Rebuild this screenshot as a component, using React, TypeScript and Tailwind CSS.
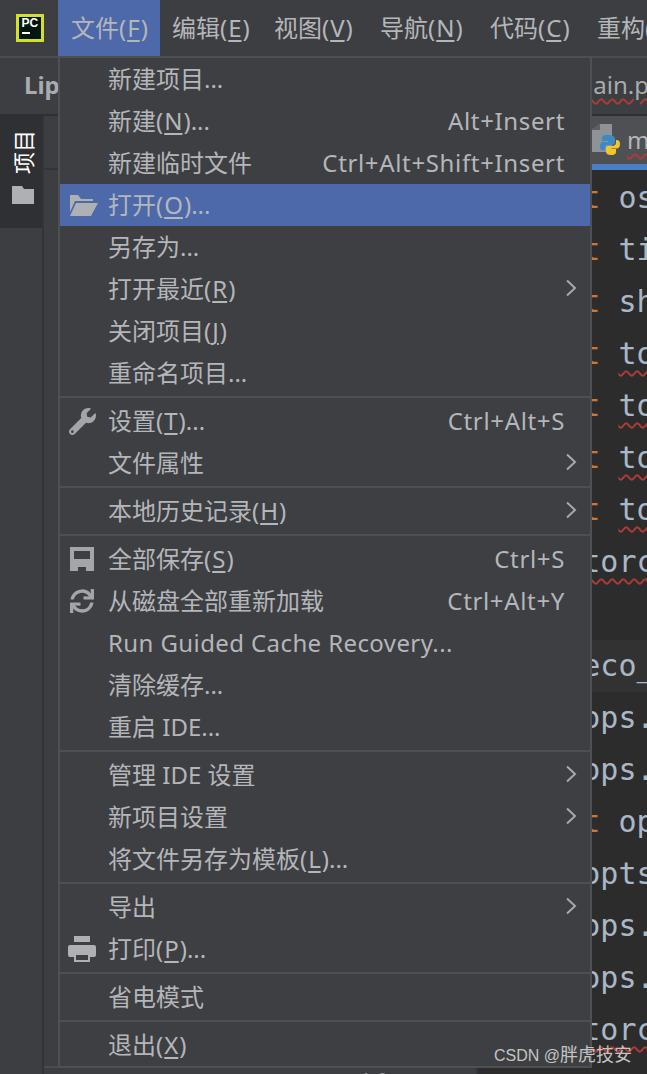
import { FaSync, FaWrench } from "react-icons/fa";

const topMenus = [
  { label: "文件(&F)", box: "w-[102px] pl-[13px] bg-[#4d69aa]" },
  { label: "编辑(&E)", box: "w-[102px] pl-[12px]" },
  { label: "视图(&V)", box: "w-[106px] pl-[12px]" },
  { label: "导航(&N)", box: "w-[110px] pl-[12px]" },
  { label: "代码(&C)", box: "w-[107px] pl-[12px]" },
  { label: "重构(&R)", box: "w-[110px] pl-[12px]" },
];

type Row = { label: string; icon?: string; shortcut?: string; more?: boolean; active?: boolean };

const sections: Row[][] = [
  [
    { label: "新建项目..." },
    { label: "新建(&N)...", shortcut: "Alt+Insert" },
    { label: "新建临时文件", shortcut: "Ctrl+Alt+Shift+Insert" },
    { label: "打开(&O)...", icon: "open", active: true },
    { label: "另存为..." },
    { label: "打开最近(&R)", more: true },
    { label: "关闭项目(&J)" },
    { label: "重命名项目..." },
  ],
  [
    { label: "设置(&T)...", icon: "wrench", shortcut: "Ctrl+Alt+S" },
    { label: "文件属性", more: true },
  ],
  [{ label: "本地历史记录(&H)", more: true }],
  [
    { label: "全部保存(&S)", icon: "save", shortcut: "Ctrl+S" },
    { label: "从磁盘全部重新加载", icon: "sync", shortcut: "Ctrl+Alt+Y" },
    { label: "Run Guided Cache Recovery..." },
    { label: "清除缓存..." },
    { label: "重启 IDE..." },
  ],
  [
    { label: "管理 IDE 设置", more: true },
    { label: "新项目设置", more: true },
    { label: "将文件另存为模板(&L)..." },
  ],
  [
    { label: "导出", more: true },
    { label: "打印(&P)...", icon: "print" },
  ],
  [{ label: "省电模式" }],
  [{ label: "退出(&X)" }],
];

type Line = { lead: string; word: string; wavy?: boolean; caret?: boolean };

const codeLines: Line[] = [
  { lead: "import ", word: "os" },
  { lead: "import ", word: "time" },
  { lead: "import ", word: "shutil" },
  { lead: "import ", word: "torch", wavy: true },
  { lead: "import ", word: "torch", wavy: true },
  { lead: "import ", word: "torch", wavy: true },
  { lead: "import ", word: "torch", wavy: true },
  { lead: "     ", word: "torch", wavy: true },
  { lead: "", word: " " },
  { lead: "     ", word: "eco_net", caret: true },
  { lead: "     ", word: "ops.parse" },
  { lead: "     ", word: "ops.parse" },
  { lead: "import ", word: "opts" },
  { lead: "     ", word: "opts.add" },
  { lead: "     ", word: "ops.parse" },
  { lead: "     ", word: "ops.parse" },
  { lead: "     ", word: "torch", wavy: true },
];

function Mnemonic({ label }: { label: string }) {
  const at = label.indexOf("&");
  if (at < 0) return <>{label}</>;
  return (
    <>
      {label.slice(0, at)}
      <span className="mx-px underline decoration-2 underline-offset-[3px]">{label[at + 1]}</span>
      {label.slice(at + 2)}
    </>
  );
}

function RowIcon({ name }: { name?: string }) {
  if (name === "open")
    return (
      <svg width="28" height="21" viewBox="0 0 28 21" fill="#aeb0b4" className="ml-[4px]">
        <path d="M0 0H8L11 4H23V6H5L0 17Z" />
        <path d="M6 8H28L21 21H0Z" />
      </svg>
    );
  if (name === "wrench") return <FaWrench size={27} color="#a3a5a9" />;
  if (name === "sync") return <FaSync size={24} color="#a3a5a9" />;
  if (name === "save")
    return (
      <svg width="24" height="24" viewBox="0 0 24 24" fill="#a3a5a9">
        <path fillRule="evenodd" d="M0 0H24V24H0ZM4 4V12H20V4ZM8 20V24H16V20Z" />
      </svg>
    );
  if (name === "print")
    return (
      <svg width="28" height="26" viewBox="0 0 28 26" fill="#aeb0b4">
        <path d="M6 0H22V6H6Z" />
        <path d="M2 9H26Q28 9 28 11V19Q28 21 26 21H22V17H6V21H2Q0 21 0 19V11Q0 9 2 9Z" />
        <path fillRule="evenodd" d="M6 17H22V26H6ZM8 19V24H20V19Z" />
      </svg>
    );
  return null;
}

function MenuRow({ row }: { row: Row }) {
  return (
    <div className={`flex h-[42px] items-center pr-[12px] ${row.active ? "bg-[#4d69aa]" : ""}`}>
      <div className="flex w-[48px] shrink-0 items-center justify-center pr-[4px]">
        <RowIcon name={row.icon} />
      </div>
      <span className={`whitespace-pre ${row.label.startsWith("Run") ? "tracking-[0.4px]" : ""}`}>
        <Mnemonic label={row.label} />
      </span>
      <span className="ml-auto mr-[13px] whitespace-pre tracking-[0.65px]">{row.shortcut}</span>
      {row.more && (
        <svg width="14" height="18" viewBox="0 0 14 18" className="-translate-y-[1px]" fill="none" stroke="#a6a8ab" strokeWidth="2">
          <path d="M3 1.5L11 9L3 16.5" />
        </svg>
      )}
    </div>
  );
}

function PythonFileIcon() {
  return (
    <svg width="28" height="32" viewBox="0 0 28 32" className="shrink-0">
      <path d="M8 0H20V28H0V6Z" fill="#8f9296" />
      <path d="M8 0V6H0Z" fill="#5c5e62" />
      <path d="M15 11C10 11 10 13 10 15V17H16V18H11C9 18 8 20 8 22C8 25 9 26.500 11 26.500H13V24C13 22 14 21 16 21H20C22 21 23 20 23 18V15C23 12.500 21 11 15 11Z" fill="#3b8ac4" />
      <path d="M19 31C24 31 24 29 24 27V25H18V24.500H24.500C26.500 24.500 28 23 28 20C28 17.500 27 16 24.500 16H24V19C24 21 22 22 20 22H16C14 22 14 23 14 25V27.500C14 30 16 31 19 31Z" fill="#f2c72c" />
    </svg>
  );
}

export default function App() {
  return (
    <div className="relative flex h-[1074px] w-[647px] flex-col overflow-hidden bg-[#3d3e42] text-[24px] leading-[42px] text-[#b4b6b9] [font-family:'Noto_Sans','Noto_Sans_CJK_SC',sans-serif]">
      {/* menu bar */}
      <div className="flex h-[58px] shrink-0 border-b-2 border-[#4b4c50]">
        <div className="flex w-[58px] shrink-0 items-center justify-center pl-[1px]">
          <div className="flex h-[28px] w-[28px] flex-col bg-[#d3e02a] p-[3px]">
            <div className="flex h-full flex-col bg-[#04170f] pl-[3px]">
              <span className="text-[12px] font-bold leading-[13px] text-white [font-family:'Liberation_Sans',sans-serif]">PC</span>
              <span className="mt-[2px] h-[2px] w-[8px] bg-white" />
            </div>
          </div>
        </div>
        {topMenus.map((m) => (
          <div key={m.label} className={`flex h-[56px] shrink-0 items-center whitespace-pre ${m.box}`}>
            <Mnemonic label={m.label} />
          </div>
        ))}
      </div>

      {/* toolbar */}
      <div className="flex h-[58px] shrink-0 items-center whitespace-pre border-b-2 border-[#2f3033] pb-[2px]">
        <span className="ml-[24px] font-bold text-[#a9abae]">Lipread</span>
        <span className="ml-[457px] text-[#a9abae] underline decoration-wavy decoration-[1.5px] decoration-[#b23a36] underline-offset-4">main.py</span>
      </div>

      <div className="flex min-h-0 flex-1">
        {/* tool window strip */}
        <div className="w-[44px] shrink-0 border-r-2 border-[#333437]">
          <div className="flex h-[112px] flex-col items-center bg-[#2f3033] pl-[3px] pt-[14px]">
            <span className="rotate-180 text-[22px] leading-[22px] text-white [text-orientation:sideways] [writing-mode:vertical-rl]">项目</span>
            <svg width="22" height="18" viewBox="0 0 22 18" fill="#aeb0b4" className="mt-[12px]">
              <path d="M0 0H10L12 3H22V18H0Z" />
            </svg>
          </div>
        </div>

        {/* project panel */}
        <div className="flex w-[434px] shrink-0 flex-col justify-between overflow-hidden border-r-2 border-[#333437]">
          <div className="h-[54px] border-b-2 border-[#333437]" />
          <div className="h-[8px] overflow-hidden border-t-2 border-[#4b4c50] pl-[316px] text-[20px] leading-[24px] text-[#8f9195]">1.0</div>
        </div>

        {/* editor */}
        <div className="flex min-w-0 flex-1 flex-col bg-[#2c2c2d]">
          <div className="flex h-[48px] shrink-0 items-center whitespace-pre bg-[#4e5054] pl-[114px] text-[#b4b6b9]">
            <PythonFileIcon />
            <span className="ml-[7px] underline decoration-wavy decoration-[1.5px] decoration-[#b23a36] underline-offset-4">main.py</span>
          </div>
          <div className="h-[6px] shrink-0 bg-[#4a7fc4]" />
          <div className="pt-[2px] text-[30px] leading-[52px] text-[#a9b7c6] [font-family:'DejaVu_Sans_Mono',monospace]">
            {codeLines.map((l, i) => (
              <div key={i} className={`h-[52px] whitespace-pre pl-[14px] ${l.caret ? "bg-[#323232]" : ""}`}>
                <span className="text-[#cc7832]">{l.lead}</span>
                <span className={l.wavy ? "underline decoration-wavy decoration-2 decoration-[#b23a36] underline-offset-[6px]" : ""}>{l.word}</span>
              </div>
            ))}
          </div>
        </div>
      </div>

      {/* open file menu */}
      <div className="absolute left-[58px] top-[56px] h-[1012px] w-[534px] border-2 border-[#4f5054] bg-[#3e3f43]">
        {sections.map((rows, i) => (
          <div key={i}>
            {i > 0 && <div className="my-[2px] h-[2px] bg-[#4f5054]" />}
            {rows.map((r) => (
              <MenuRow key={r.label} row={r} />
            ))}
          </div>
        ))}
      </div>

      {/* watermark */}
      <div className="absolute left-[494px] top-[1043px] whitespace-pre text-[16px] leading-[24px] text-[#c4c4c4] [font-family:'Liberation_Sans','Noto_Sans_CJK_SC',sans-serif]">
        CSDN @<span className="text-[18px]">胖虎技安</span>
      </div>
    </div>
  );
}
